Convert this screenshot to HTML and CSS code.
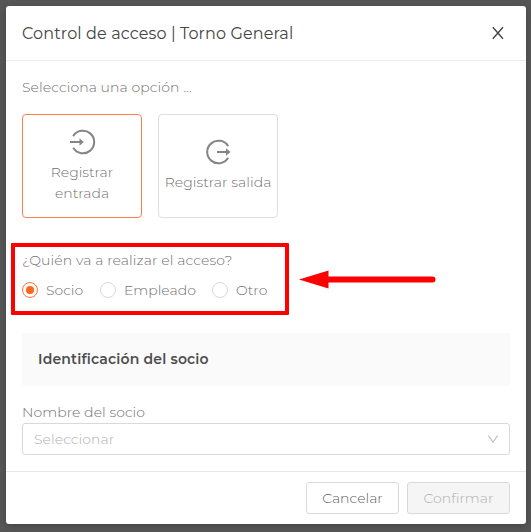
FILE: index.html
```html
<!DOCTYPE html>
<html lang="es">
<head>
<meta charset="utf-8">
<title>Control de acceso</title>
<link rel="stylesheet" href="styles.css">
</head>
<body>
<div class="modal">
  <header class="header">
    <h1 class="title"><span>Control de acceso | Torno General</span></h1>
    <svg class="close" width="12" height="14" viewBox="0 0 12 14"><path d="M.8 1.3 11 12.7M11 1.3.8 12.7" fill="none" stroke="#454545" stroke-width="1.4"/></svg>
  </header>
  <main class="body">
    <p class="prompt"><span>Selecciona una opción ...</span></p>
    <div class="cards">
      <div class="card selected">
        <svg width="28" height="26" viewBox="0 0 28 26" fill="none" stroke="#858585" stroke-width="2"><path d="M5.2 7.2A11.3 11.3 0 1 1 5.2 18.8"/><path d="M2 13H13"/><path d="M11.5 9.3 15.8 13 11.5 16.7Z" fill="#858585" stroke="none"/></svg>
        <span class="reg">Registrar</span>
        <span class="ent">entrada</span>
      </div>
      <div class="card">
        <svg width="28" height="26" viewBox="0 0 28 26" fill="none" stroke="#858585" stroke-width="2"><path d="M24.2 7.2A11.3 11.3 0 1 0 24.2 18.8"/><path d="M13 13H24"/><path d="M22 9.3 26.5 13 22 16.7Z" fill="#858585" stroke="none"/></svg>
        <span class="sal">Registrar salida</span>
      </div>
    </div>
    <section class="who">
      <p class="question"><span>¿Quién va a realizar el acceso?</span></p>
      <div class="radios">
        <label class="radio socio"><i class="dot on"></i><span>Socio</span></label>
        <label class="radio empleado"><i class="dot"></i><span>Empleado</span></label>
        <label class="radio otro"><i class="dot"></i><span>Otro</span></label>
      </div>
      <div class="highlight"></div>
      <svg class="arrow" width="138" height="20" viewBox="0 0 138 20" fill="#f00"><path d="M0 10.5 29.5 1.5V19.5Z"/><path d="M28 10.4H133.5" stroke="#f00" stroke-width="6" stroke-linecap="round"/></svg>
    </section>
    <h2 class="section"><span>Identificación del socio</span></h2>
    <p class="name"><span>Nombre del socio</span></p>
    <div class="select"><span>Seleccionar</span><svg width="12" height="10" viewBox="0 0 12 10"><path d="M1.3 1.5 6 8 10.7 1.5" fill="none" stroke="#bdbdbd" stroke-width="1.2"/></svg></div>
  </main>
  <footer class="footer">
    <button class="btn cancel"><span>Cancelar</span></button>
    <button class="btn confirm" disabled><span>Confirmar</span></button>
  </footer>
</div>
</body>
</html>
```
FILE: styles.css
```css
* { box-sizing: border-box; }
body { margin: 0; height: 532px; padding: 6px 5px 8px 6px; overflow: hidden; background: #575757; color: #707070; font: 300 14px/22px Montserrat, Inter, sans-serif; }
h1, h2, p { margin: 0; white-space: nowrap; }
svg { display: block; }
.modal { height: 518px; background: #fff; border-radius: 3px; box-shadow: 0 2px 7px #3338; display: flex; flex-direction: column; }
.header { height: 55px; padding: 0 22px 0 16px; border-bottom: 1px solid #ebebeb; display: flex; align-items: center; justify-content: space-between; }
.title { padding-top: 1px; font-size: 16px; font-weight: 400; color: #444; letter-spacing: .125px; }
.body { flex: 1; padding: 15px 16px; }
.prompt { letter-spacing: .08px; }
.cards { display: flex; gap: 16px; margin-top: 16px; }
.card { width: 120px; height: 104px; border: 1px solid #dedede; border-radius: 4px; display: flex; flex-direction: column; align-items: center; justify-content: center; line-height: 21px; white-space: nowrap; }
.card svg { margin-bottom: 7px; }
.selected { border-color: #ff7f4d; }
.sal { letter-spacing: .05px; }
.who { position: relative; margin-top: 31px; }
.question { letter-spacing: .1px; }
.radios { display: flex; margin-top: 8px; }
.radio { display: flex; align-items: center; gap: 8px; }
.socio { width: 78px; }
.empleado { width: 112px; }
.dot { width: 16px; height: 16px; border: 1px solid #d9d9d9; border-radius: 50%; display: grid; place-items: center; }
.on { border-color: #ff7338; }
.on::after { content: ""; width: 8px; height: 8px; border-radius: 50%; background: #ff6519; }
.highlight { position: absolute; left: -11px; top: -6px; width: 278px; height: 72px; border: 4px solid #f00; border-radius: 1px; }
.arrow { position: absolute; left: 277px; top: 20px; }
.section { height: 53px; margin-top: 32px; padding: 0 16px 2px; display: flex; align-items: center; background: #fafafa; color: #4d4d4d; font-size: 14px; font-weight: 600; letter-spacing: .18px; }
.name { margin-top: 15px; letter-spacing: .06px; }
.select { height: 32px; border: 1px solid #d9d9d9; border-radius: 3px; padding: 0 10px 0 11px; display: flex; align-items: center; justify-content: space-between; color: #b0b0b0; letter-spacing: .06px; }
.footer { height: 53px; border-top: 1px solid #e8e8e8; padding: 10px 16px; display: flex; justify-content: flex-end; gap: 8px; }
.btn { height: 32px; padding: 0; border: 1px solid #d9d9d9; border-radius: 3px; background: #fff; color: #606060; font: inherit; }
.cancel { width: 93px; }
.confirm { width: 103px; background: #f5f5f5; color: #b0b0b0; }
```
